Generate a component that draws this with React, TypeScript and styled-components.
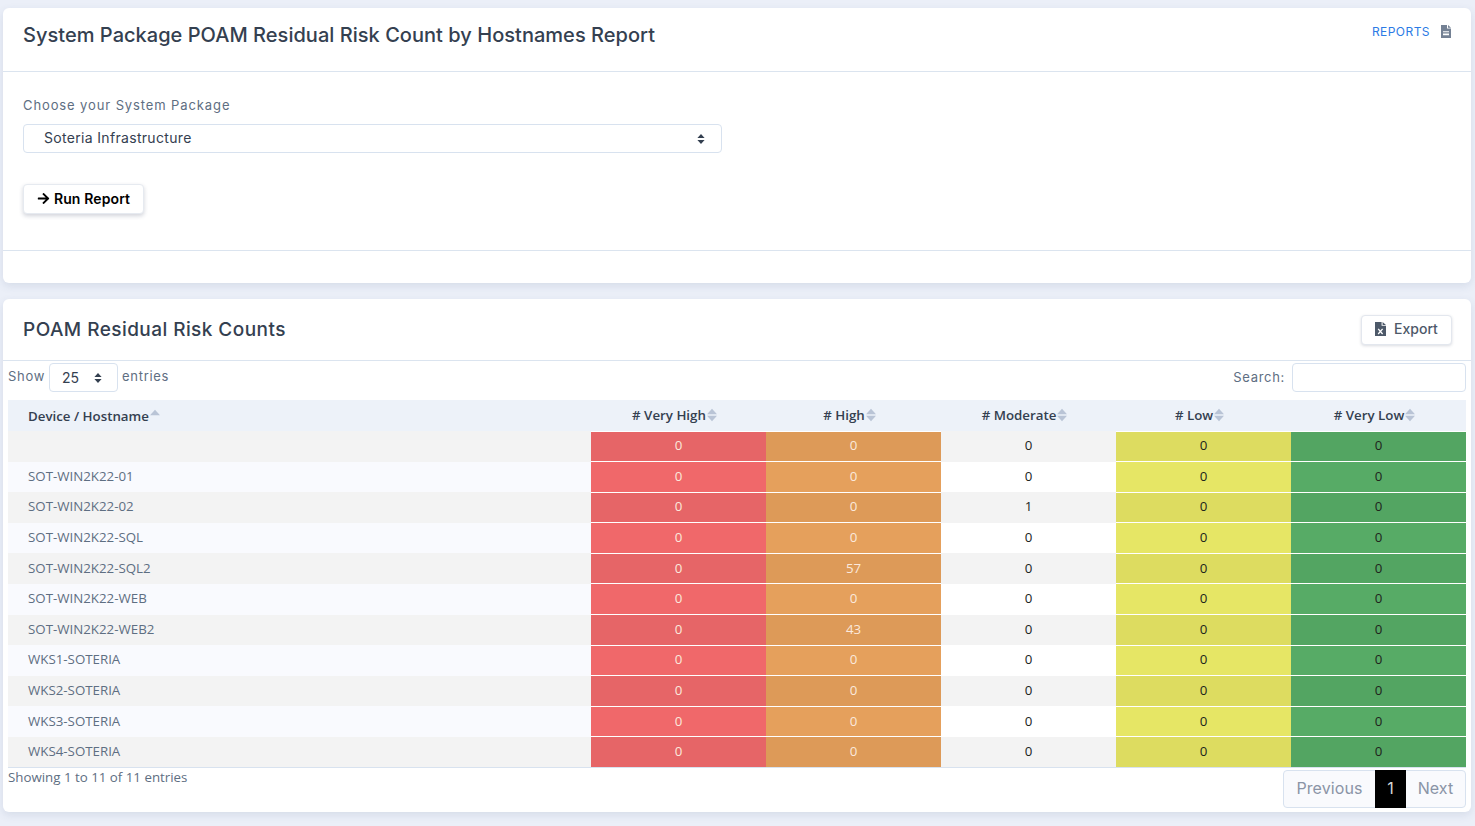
import React, { FC } from 'react';
import styled, { createGlobalStyle } from 'styled-components';
import { FaArrowRight } from 'react-icons/fa';

const GlobalStyle = createGlobalStyle`
  html, body {
    margin: 0;
    padding: 0;
    height: 826px;
    overflow: hidden;
    background: #ebeff8;
  }
`;

const headingFont = `Inter, "Noto Sans", sans-serif`;
const cellFont = `"Open Sans", "Noto Sans", sans-serif`;

const Page = styled.div`
  padding: 8px 4px 0 3px;
  font-family: ${headingFont};
`;

const Card = styled.section`
  background: #fff;
  border-radius: 6px;
  box-shadow: 0 3px 8px rgba(60, 80, 120, 0.12);
  margin-bottom: 16px;
`;

const ReportHeader = styled.header`
  height: 63px;
  padding: 0 20px;
  display: flex;
  justify-content: space-between;
  border-bottom: 1px solid #dbe4ef;
`;

const PageTitle = styled.h1`
  margin: 15px 0 0;
  font-size: 20px;
  line-height: 25px;
  font-weight: 500;
  letter-spacing: 0.03px;
  color: #344050;
`;

const ReportsLink = styled.a`
  margin: 13px 0 0;
  height: 20px;
  display: flex;
  align-items: center;
  gap: 11px;
  font-size: 12px;
  letter-spacing: 0.45px;
  color: #2c7be5;
`;

const ReportBody = styled.div`
  height: 179px;
  padding: 25px 20px 0;
  box-sizing: border-box;
  border-bottom: 1px solid #dbe4ef;
`;

const FieldLabel = styled.label`
  display: block;
  font-size: 13px;
  line-height: 16px;
  letter-spacing: 0.89px;
  color: #5e6e82;
`;

const SelectBox = styled.div`
  position: relative;
  margin-top: 11px;
  width: 699px;
  height: 29px;
`;

const Select = styled.select`
  width: 100%;
  height: 100%;
  appearance: none;
  background: #fff;
  border: 1px solid #d8e2ef;
  border-radius: 4px;
  padding: 0 20px 2px;
  font-family: ${headingFont};
  font-size: 14px;
  letter-spacing: 0.32px;
  color: #344050;
`;

const ChevronSlot = styled.span<{ $right: number }>`
  position: absolute;
  top: 50%;
  right: ${p => p.$right}px;
  transform: translateY(-50%);
  display: flex;
  pointer-events: none;
`;

const RunButton = styled.button`
  margin-top: 31px;
  height: 30px;
  width: 121px;
  padding: 0 0 2px;
  display: flex;
  align-items: center;
  justify-content: center;
  gap: 4px;
  background: #fff;
  border: 1px solid #e6eaf0;
  border-radius: 4px;
  box-shadow: 0 2px 4px rgba(50, 60, 90, 0.22);
  font-family: ${headingFont};
  font-size: 14px;
  letter-spacing: 0.12px;
  font-weight: 600;
  color: #000;
`;

const ReportFooter = styled.div`
  height: 32px;
`;

const TableHeader = styled.header`
  height: 61px;
  padding: 0 19px 0 20px;
  display: flex;
  align-items: center;
  justify-content: space-between;
  border-bottom: 1px solid #dbe4ef;
`;

const TableTitle = styled.h2`
  margin: 0;
  font-size: 19px;
  font-weight: 500;
  letter-spacing: 0.44px;
  color: #344050;
`;

const ExportButton = styled.button`
  width: 91px;
  height: 30px;
  padding: 0 0 2px;
  display: flex;
  align-items: center;
  justify-content: center;
  gap: 8px;
  background: #fff;
  border: 1px solid #e3e7ee;
  border-radius: 4px;
  box-shadow: 0 1px 3px rgba(50, 60, 90, 0.18);
  font-family: ${headingFont};
  font-size: 14px;
  font-weight: 500;
  color: #4d5969;
`;

const Wrapper = styled.div`
  padding: 0 5px;
`;

const Controls = styled.div`
  height: 39px;
  display: flex;
  justify-content: space-between;
  align-items: flex-start;
  font-size: 13px;
  letter-spacing: 0.7px;
  color: #5e6e82;
`;

const LengthControl = styled.div`
  display: flex;
  align-items: flex-start;
  gap: 4px;
  line-height: 30px;
`;

const LengthSelect = styled.div`
  position: relative;
  width: 69px;
  height: 29px;
  margin-top: 2px;
  box-sizing: border-box;
  border: 1px solid #d8e2ef;
  border-radius: 4px;
  padding-left: 12px;
  display: flex;
  align-items: center;
  font-size: 14px;
  color: #344050;
  letter-spacing: 0;
`;

const SearchControl = styled.div`
  display: flex;
  align-items: center;
  gap: 7px;
  margin-top: 2px;
`;

const SearchLabel = styled.span`
  margin-bottom: 2px;
`;

const SearchInput = styled.input`
  width: 174px;
  height: 29px;
  padding: 0 6px;
  box-sizing: border-box;
  background: #fff;
  border: 1px solid #d8e2ef;
  border-radius: 4px;
`;

const Table = styled.table`
  width: 1458px;
  table-layout: fixed;
  border-collapse: collapse;
  font-family: ${cellFont};
  font-size: 13.3px;
  border-bottom: 1px solid #d8e2ef;
`;

const HeadRow = styled.tr`
  height: 31px;
  background: #edf2f9;
`;

const HeadCell = styled.th<{ $first?: boolean }>`
  padding: ${p => (p.$first ? '0 0 0 20px' : '0 8px 0 0')};
  font-weight: 600;
  font-size: 13.3px;
  color: #344050;
  text-align: ${p => (p.$first ? 'left' : 'center')};
`;

const HeadInner = styled.span`
  display: inline-flex;
  align-items: center;
  gap: 1px;
`;

const Row = styled.tr<{ $striped: boolean }>`
  height: 30.6px;
  background: ${p => (p.$striped ? '#f3f3f3' : '#fff')};
`;

const NameCell = styled.td<{ $striped: boolean }>`
  padding: 0 0 2px 20px;
  color: #5e6e82;
  background: ${p => (p.$striped ? '#f3f3f3' : '#f9fafe')};
`;

type Tone = 'veryHigh' | 'high' | 'moderate' | 'low' | 'veryLow';

const toneColors: Record<Tone, [string, string]> = {
  veryHigh: ['#f0686a', '#e66567'],
  high: ['#e5a05c', '#dd9a58'],
  moderate: ['#ffffff', '#f3f3f3'],
  low: ['#e6e665', '#dddc60'],
  veryLow: ['#57ab66', '#53a562'],
};

const CountCell = styled.td<{ $tone: Tone; $striped: boolean }>`
  padding: 0 0 2px;
  text-align: center;
  background: ${p => toneColors[p.$tone][p.$striped ? 1 : 0]};
  color: ${p => (p.$tone === 'veryHigh' || p.$tone === 'high' ? '#fbe9dc' : '#20241c')};
  border-top: 1px solid ${p => (p.$tone === 'moderate' ? 'transparent' : '#fff')};
`;

const Bottom = styled.div`
  display: flex;
  justify-content: space-between;
  align-items: flex-start;
`;

const Info = styled.div`
  margin-top: 0;
  font-family: ${cellFont};
  font-size: 13.3px;
  line-height: 18px;
  color: #5e6e82;
`;

const Pagination = styled.nav`
  display: flex;
  height: 38px;
  margin: 2px 0 4px;
  box-sizing: border-box;
  background: #f9fafd;
  border: 1px solid #d8e2ef;
  border-radius: 4px;
  font-size: 16px;
  letter-spacing: 0.1px;
  color: #8a94a6;
`;

const PageButton = styled.span<{ $active?: boolean; $width: number }>`
  width: ${p => p.$width}px;
  padding-bottom: 2px;
  box-sizing: border-box;
  display: flex;
  align-items: center;
  justify-content: center;
  margin: ${p => (p.$active ? '-1px 0' : '0')};
  background: ${p => (p.$active ? '#000' : 'transparent')};
  color: ${p => (p.$active ? '#d8d8d8' : '#8a94a6')};
`;

const SortIcon: FC<{ upOnly?: boolean }> = ({ upOnly }) => (
  <svg width="10" height="14" viewBox="0 0 10 14">
    <path d="M5 .8 10 6.2H0Z" fill="#b9c4d6" />
    {!upOnly && <path d="M5 13.2 10 7.8H0Z" fill="#b9c4d6" />}
  </svg>
);

const Chevrons: FC = () => (
  <svg width="8" height="11" viewBox="0 0 8 11">
    <path d="M4 .5 7.6 4.4H.4ZM4 10.5 7.6 6.6H.4Z" fill="#344050" />
  </svg>
);

const ReportIcon: FC = () => (
  <svg width="10" height="13" viewBox="0 0 10 13">
    <path
      fill="#748194"
      fillRule="evenodd"
      d="M0 0h6v3.5h4V13H0ZM2 6.3v1h6v-1ZM2 8.6v1.6h6V8.6ZM7 0l3 2.7H7Z"
    />
  </svg>
);

const ExcelIcon: FC = () => (
  <svg width="11" height="14" viewBox="0 0 11 14">
    <path fill="#4d5969" d="M0 0h6.6v3.8H11V14H0ZM7.6 0 11 2.9H7.6Z" />
    <path stroke="#fff" strokeWidth="1.3" d="M3.2 6.8 7.6 12M7.6 6.8 3.2 12" />
  </svg>
);

interface DeviceRow {
  name: string;
  moderate: number;
  high: number;
}

const devices: DeviceRow[] = [
  { name: '', high: 0, moderate: 0 },
  { name: 'SOT-WIN2K22-01', high: 0, moderate: 0 },
  { name: 'SOT-WIN2K22-02', high: 0, moderate: 1 },
  { name: 'SOT-WIN2K22-SQL', high: 0, moderate: 0 },
  { name: 'SOT-WIN2K22-SQL2', high: 57, moderate: 0 },
  { name: 'SOT-WIN2K22-WEB', high: 0, moderate: 0 },
  { name: 'SOT-WIN2K22-WEB2', high: 43, moderate: 0 },
  { name: 'WKS1-SOTERIA', high: 0, moderate: 0 },
  { name: 'WKS2-SOTERIA', high: 0, moderate: 0 },
  { name: 'WKS3-SOTERIA', high: 0, moderate: 0 },
  { name: 'WKS4-SOTERIA', high: 0, moderate: 0 },
];

const columns = ['# Very High', '# High', '# Moderate', '# Low', '# Very Low'];

const App: FC = () => {
  return (
    <Page>
      <GlobalStyle />
      <Card>
        <ReportHeader>
          <PageTitle>System Package POAM Residual Risk Count by Hostnames Report</PageTitle>
          <ReportsLink>
            REPORTS
            <ReportIcon />
          </ReportsLink>
        </ReportHeader>
        <ReportBody>
          <FieldLabel>Choose your System Package</FieldLabel>
          <SelectBox>
            <Select defaultValue="soteria">
              <option value="soteria">Soteria Infrastructure</option>
            </Select>
            <ChevronSlot $right={17}>
              <Chevrons />
            </ChevronSlot>
          </SelectBox>
          <RunButton>
            <FaArrowRight size={13} />
            Run Report
          </RunButton>
        </ReportBody>
        <ReportFooter />
      </Card>
      <Card>
        <TableHeader>
          <TableTitle>POAM Residual Risk Counts</TableTitle>
          <ExportButton>
            <ExcelIcon />
            Export
          </ExportButton>
        </TableHeader>
        <Wrapper>
          <Controls>
            <LengthControl>
              Show
              <LengthSelect>
                25
                <ChevronSlot $right={15}>
                  <Chevrons />
                </ChevronSlot>
              </LengthSelect>
              entries
            </LengthControl>
            <SearchControl>
              <SearchLabel>Search:</SearchLabel>
              <SearchInput />
            </SearchControl>
          </Controls>
          <Table>
            <colgroup>
              <col style={{ width: 583 }} />
              {columns.map(c => (
                <col key={c} style={{ width: 175 }} />
              ))}
            </colgroup>
            <thead>
              <HeadRow>
                <HeadCell $first>
                  <HeadInner>
                    Device / Hostname
                    <SortIcon upOnly />
                  </HeadInner>
                </HeadCell>
                {columns.map(c => (
                  <HeadCell key={c}>
                    <HeadInner>
                      {c}
                      <SortIcon />
                    </HeadInner>
                  </HeadCell>
                ))}
              </HeadRow>
            </thead>
            <tbody>
              {devices.map((d, i) => {
                const striped = i % 2 === 0;
                return (
                  <Row key={d.name || 'blank'} $striped={striped}>
                    <NameCell $striped={striped}>{d.name}</NameCell>
                    <CountCell $tone="veryHigh" $striped={striped}>0</CountCell>
                    <CountCell $tone="high" $striped={striped}>{d.high}</CountCell>
                    <CountCell $tone="moderate" $striped={striped}>{d.moderate}</CountCell>
                    <CountCell $tone="low" $striped={striped}>0</CountCell>
                    <CountCell $tone="veryLow" $striped={striped}>0</CountCell>
                  </Row>
                );
              })}
            </tbody>
          </Table>
          <Bottom>
            <Info>Showing 1 to 11 of 11 entries</Info>
            <Pagination>
              <PageButton $width={91}>Previous</PageButton>
              <PageButton $active $width={31}>1</PageButton>
              <PageButton $width={59}>Next</PageButton>
            </Pagination>
          </Bottom>
        </Wrapper>
      </Card>
    </Page>
  );
};

export default App;
